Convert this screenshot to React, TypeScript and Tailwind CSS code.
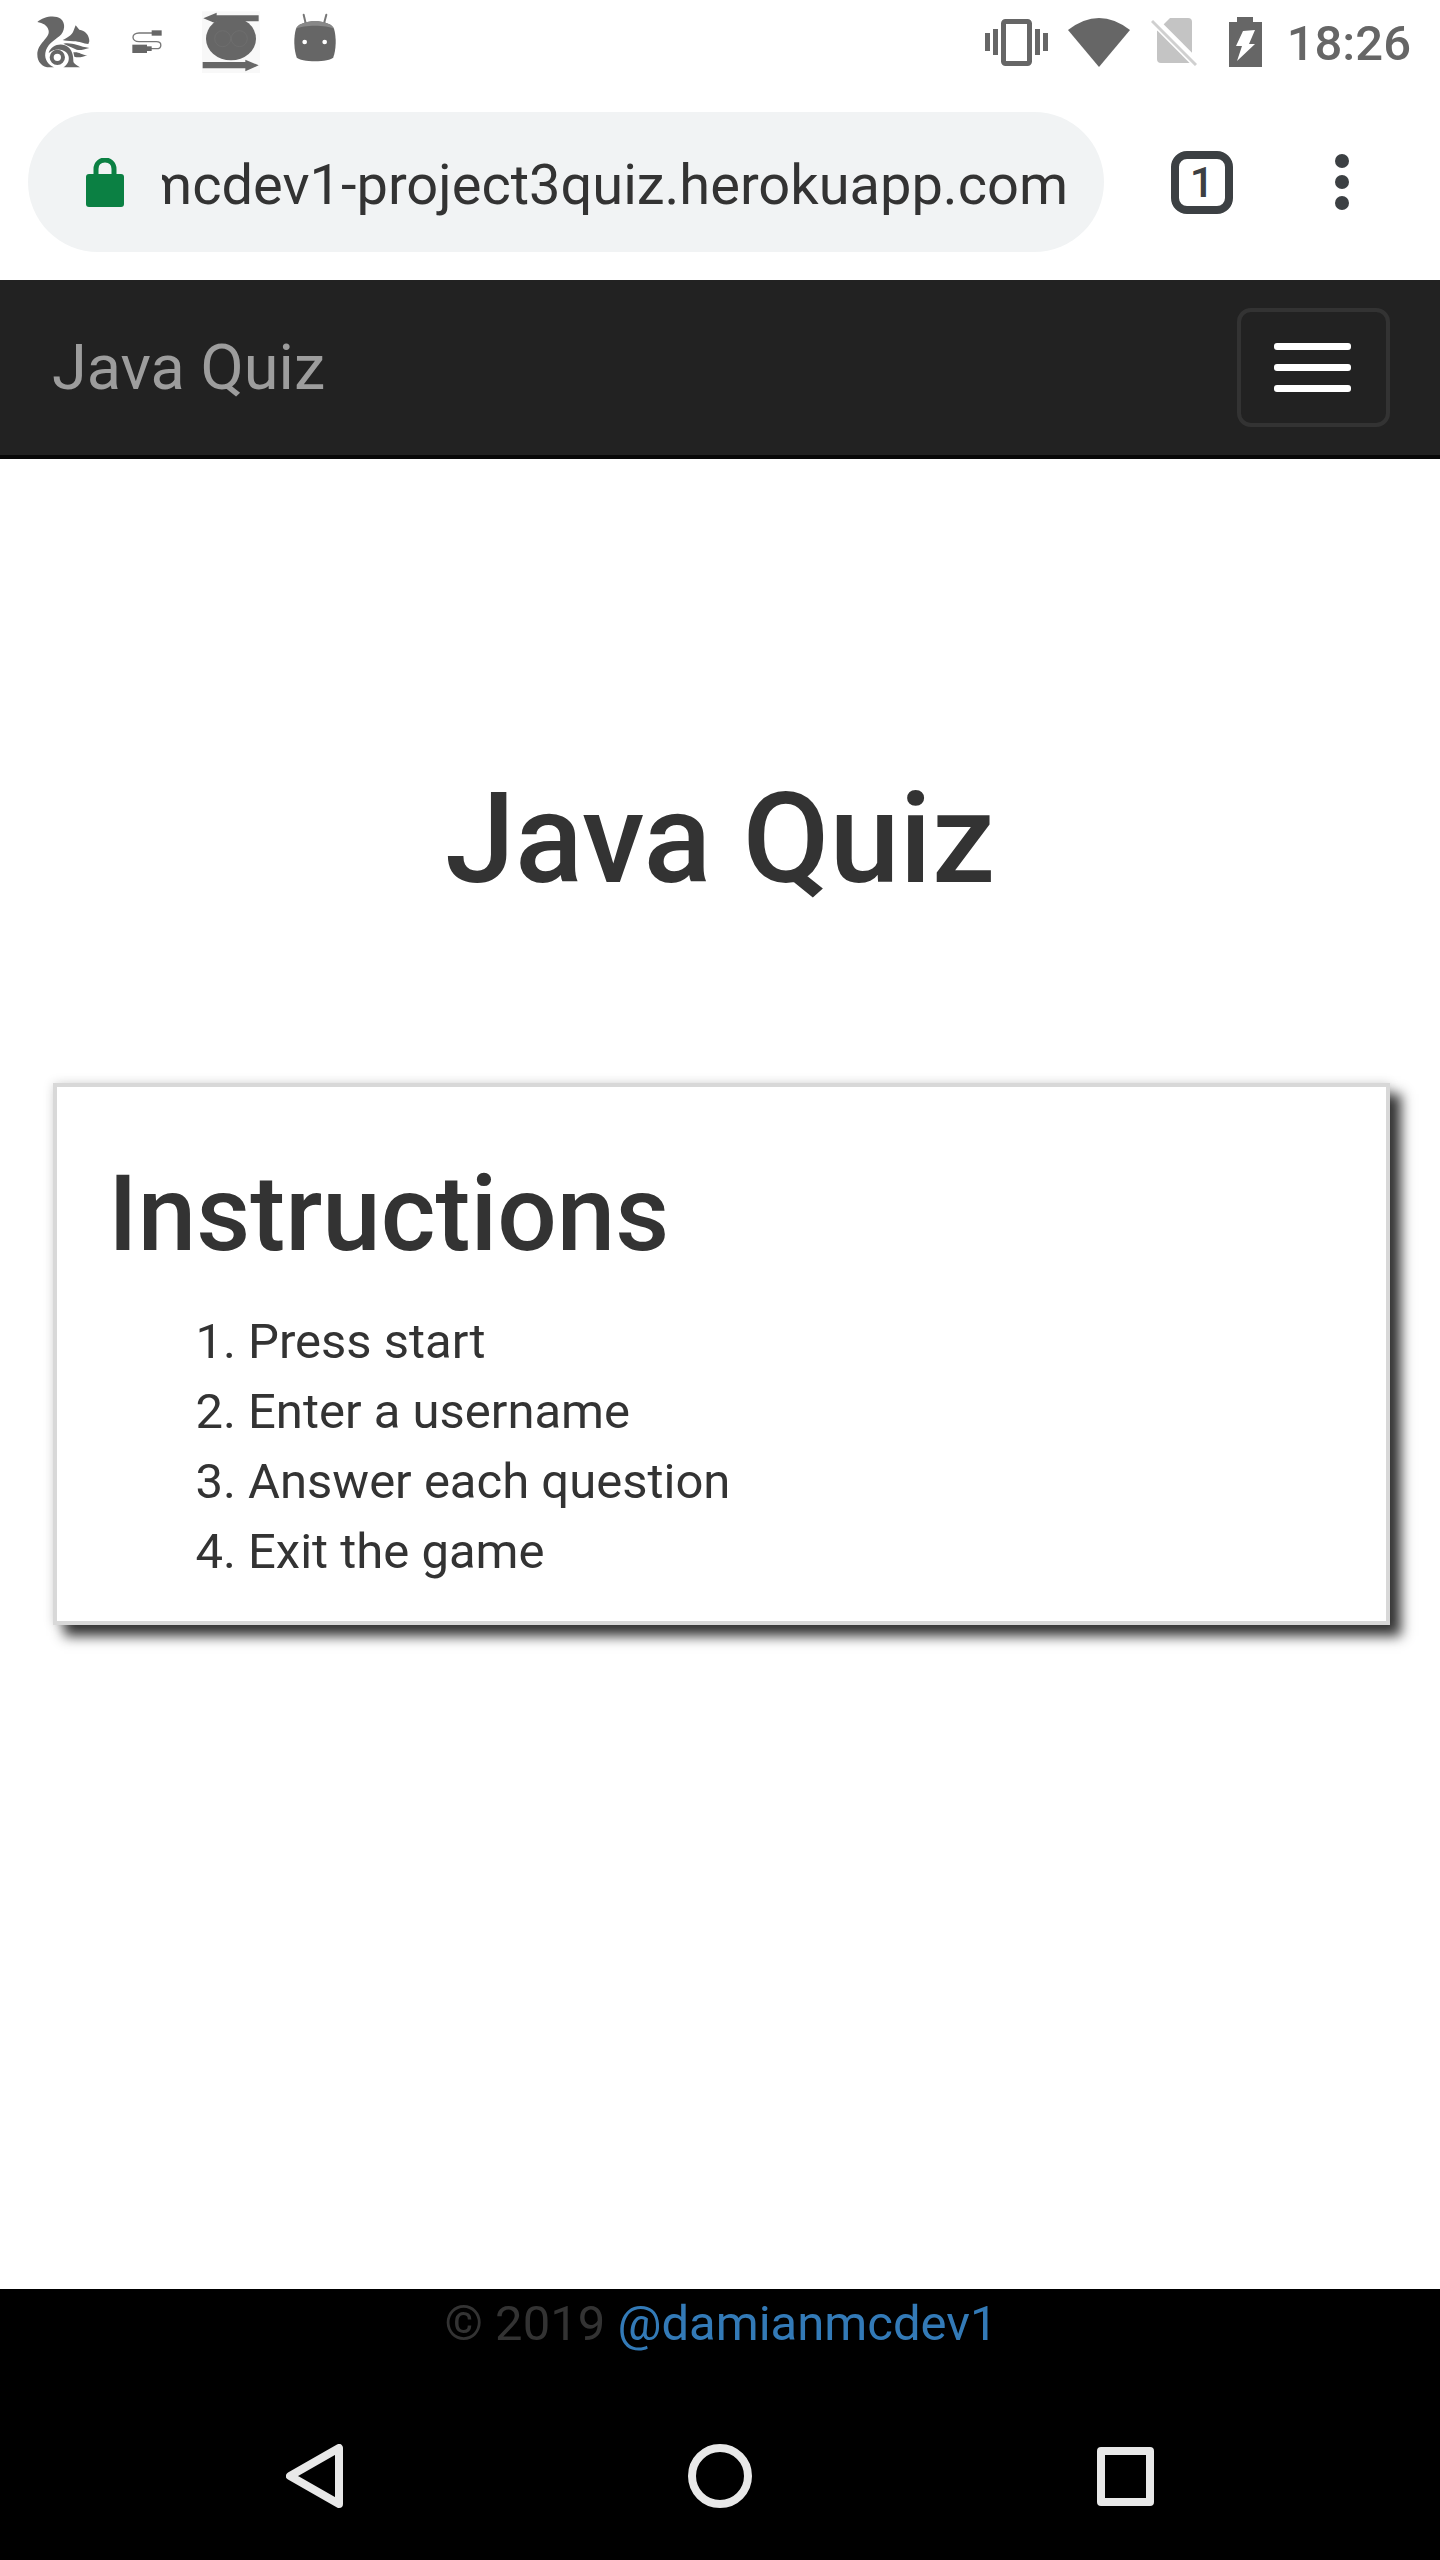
import React from 'react';

const Squirrel = () => (
    <svg width="70" height="70" viewBox="0 0 210 210" fill="#666">
        <path d="M22 42C40 25 75 20 92 32C108 45 105 70 88 85C72 98 50 110 46 135C43 155 55 170 72 178L60 178C35 178 22 160 22 140C22 105 60 90 56 68C52 50 38 46 22 42Z" />
        <circle cx="82" cy="148" r="17" fill="none" stroke="#666" strokeWidth="12" />
        <path d="M56 135C62 115 85 105 105 112C122 118 130 135 130 158C130 168 140 170 150 178H100C112 170 118 160 116 146C112 125 80 115 56 135Z" />
        <path d="M98 96C112 90 125 82 130 70L137 52L148 65C165 68 178 80 178 100L175 108C160 108 150 100 130 100C115 98 105 98 98 96Z" />
        <path d="M100 107C125 102 145 115 178 120C160 125 150 128 140 125C125 118 110 112 100 107Z" />
        <path d="M130 133C145 130 155 140 172 142C158 148 142 150 133 146Z" />
    </svg>
);

const Cable = () => (
    <svg width="70" height="70" viewBox="0 0 210 210" fill="#666">
        <path d="M82 75H42C18 75 18 101 42 101H94C112 101 112 122 94 122H76" fill="none" stroke="#777" strokeWidth="4" />
        <rect x="80" y="67" width="30" height="16" />
        <rect x="22" y="110" width="44" height="25" />
        <rect x="64" y="115" width="16" height="14" />
    </svg>
);

const Transfer = () => (
    <svg width="70" height="70" viewBox="0 0 210 210" fill="#666">
        <rect x="18" y="10" width="174" height="185" fill="#f8f8f8" />
        <path d="M188 22V40H62V47L22 31L62 14V22Z" />
        <ellipse cx="105" cy="92" rx="75" ry="65" />
        <circle cx="80" cy="92" r="24" fill="none" stroke="#757575" strokeWidth="1.5" />
        <circle cx="130" cy="92" r="24" fill="none" stroke="#757575" strokeWidth="1.5" />
        <path d="M20 162H148V155L188 172L148 190V181H20Z" />
    </svg>
);

const Robot = () => (
    <svg width="70" height="70" viewBox="0 0 210 210" fill="#666">
        <path d="M71 20L78 50M139 20L131 50" stroke="#777" strokeWidth="6" strokeLinecap="round" />
        <path d="M48 62C60 32 150 32 162 62C170 90 168 125 160 148C150 164 60 164 50 148C42 125 40 90 48 62Z" />
        <path d="M48 62C60 32 150 32 162 62C140 50 70 50 48 62Z" fill="#888" />
        <circle cx="74" cy="102" r="7" fill="#fff" />
        <circle cx="134" cy="102" r="7" fill="#fff" />
    </svg>
);

const Vibrate = () => (
    <svg width="63" height="47" viewBox="0 0 63 47" fill="#666">
        <rect x="18.5" y="2.5" width="26" height="42" rx="2" fill="none" stroke="#666" strokeWidth="5" />
        <rect x="0" y="14" width="5" height="18" />
        <rect x="8" y="10" width="5" height="26" />
        <rect x="50" y="10" width="5" height="26" />
        <rect x="58" y="14" width="5" height="18" />
    </svg>
);

const Wifi = () => (
    <svg width="62" height="49" viewBox="0 0 62 49" fill="#666">
        <path d="M0 12Q31 -12 62 12L31 49Z" />
    </svg>
);

const NoSim = () => (
    <svg width="46" height="48" viewBox="0 0 46 48">
        <path d="M19 0H37Q41 0 41 4V41Q41 45 37 45H10Q6 45 6 41V13Z" fill="#c4c4c4" />
        <path d="M0 0L46 46" stroke="#fff" strokeWidth="9" />
        <path d="M1 3L45 47" stroke="#d0d0d0" strokeWidth="3" />
    </svg>
);

const Battery = () => (
    <svg width="33" height="50" viewBox="0 0 33 50" fill="#666">
        <path d="M8 0H24V5H33V50H0V5H8Z" />
        <path d="M14 14L26 13L20 27H26L8 44L13 29H7Z" fill="#fff" />
    </svg>
);

export default function App() {
    return (
        <div className="flex flex-col w-[1440px] h-[2560px] bg-white font-[Roboto,sans-serif] text-[#333]">
            <div className="flex items-center justify-between h-[84px] pl-[30px] pr-[29px]">
                <div className="flex items-center mt-[2px]">
                    <Squirrel />
                    <div className="ml-[25px]">
                        <Cable />
                    </div>
                    <div className="ml-[1px]">
                        <Transfer />
                    </div>
                    <div className="ml-[14px]">
                        <Robot />
                    </div>
                </div>
                <div className="flex items-center">
                    <Vibrate />
                    <div className="ml-[20px]">
                        <Wifi />
                    </div>
                    <div className="ml-[21px]">
                        <NoSim />
                    </div>
                    <div className="ml-[32px]">
                        <Battery />
                    </div>
                    <span className="ml-[25px] text-[49px] leading-[58px] font-medium text-[#666] mt-[4px]">18:26</span>
                </div>
            </div>

            <div className="flex items-center h-[196px] pl-[28px]">
                <div className="flex items-center w-[1076px] h-[140px] rounded-full bg-[#f1f3f4]">
                    <svg className="ml-[58px]" width="38" height="49" viewBox="0 0 38 49">
                        <path d="M10 18V11C10 -1 28 -1 28 11V18" fill="none" stroke="#0b8043" strokeWidth="5" />
                        <rect x="0" y="16" width="38" height="33" rx="3" fill="#0b8043" />
                    </svg>
                    <div className="flex justify-end ml-[38px] w-[906px] pt-[6px] overflow-hidden whitespace-nowrap text-[56px] leading-[70px]">
                        <span>damianmcdev1-project3quiz.herokuapp.com</span>
                    </div>
                </div>
                <div className="flex items-center justify-center ml-[67px] w-[62px] h-[63px] rounded-[16px] border-[8px] border-[#3c4043] text-[#3c4043] text-[43px] leading-none font-medium">
                    1
                </div>
                <div className="flex flex-col gap-[7px] ml-[102px]">
                    <div className="w-[14px] h-[14px] rounded-full bg-[#3c4043]"></div>
                    <div className="w-[14px] h-[14px] rounded-full bg-[#3c4043]"></div>
                    <div className="w-[14px] h-[14px] rounded-full bg-[#3c4043]"></div>
                </div>
            </div>

            <nav className="flex items-center justify-between h-[179px] pl-[52px] pr-[50px] bg-[#222] border-b-[4px] border-[#080808]">
                <span className="text-[63px] leading-[70px] text-[#9d9d9d]">Java Quiz</span>
                <button className="flex flex-col gap-[14px] items-center justify-center w-[153px] h-[119px] pr-[2px] rounded-[14px] border-[4px] border-[#333]">
                    <span className="w-[77px] h-[7px] rounded-[3px] bg-white"></span>
                    <span className="w-[77px] h-[7px] rounded-[3px] bg-white"></span>
                    <span className="w-[77px] h-[7px] rounded-[3px] bg-white"></span>
                </button>
            </nav>

            <main className="flex-1 pt-[311px]">
                <h1 className="text-center text-[126px] leading-[139px] font-medium">Java Quiz</h1>
                <section className="mt-[174px] mx-[53px] w-[1337px] h-[542px] pt-[70px] pl-[51px] border-[4px] border-[#d8d8d8] shadow-[11px_11px_12px_#333,0_0_10px_rgba(0,0,0,0.15)]">
                    <h2 className="text-[105px] leading-[115px] font-medium">Instructions</h2>
                    <ol className="mt-[35px] pl-[140px] list-decimal text-[49px] leading-[70px]">
                        <li>Press start</li>
                        <li>Enter a username</li>
                        <li>Answer each question</li>
                        <li>Exit the game</li>
                    </ol>
                </section>
            </main>

            <footer className="h-[271px] bg-black">
                <p className="text-center pl-[2px] text-[49px] leading-[70px] text-[#333]">
                    © 2019 <a className="text-[#337ab7]">@damianmcdev1</a>
                </p>
                <div className="flex items-center justify-between mt-[85px] pl-[286px] pr-[286px]">
                    <svg width="57" height="64" viewBox="0 0 57 64" fill="none" stroke="#e8e8e8" strokeWidth="8" strokeLinejoin="round">
                        <path d="M53 4V60L4 32Z" />
                    </svg>
                    <svg width="64" height="64" viewBox="0 0 64 64" fill="none" stroke="#e8e8e8" strokeWidth="8">
                        <circle cx="32" cy="32" r="28" />
                    </svg>
                    <svg width="57" height="59" viewBox="0 0 57 59" fill="none" stroke="#e8e8e8" strokeWidth="8" strokeLinejoin="round">
                        <rect x="4" y="4" width="49" height="51" />
                    </svg>
                </div>
            </footer>
        </div>
    );
}
